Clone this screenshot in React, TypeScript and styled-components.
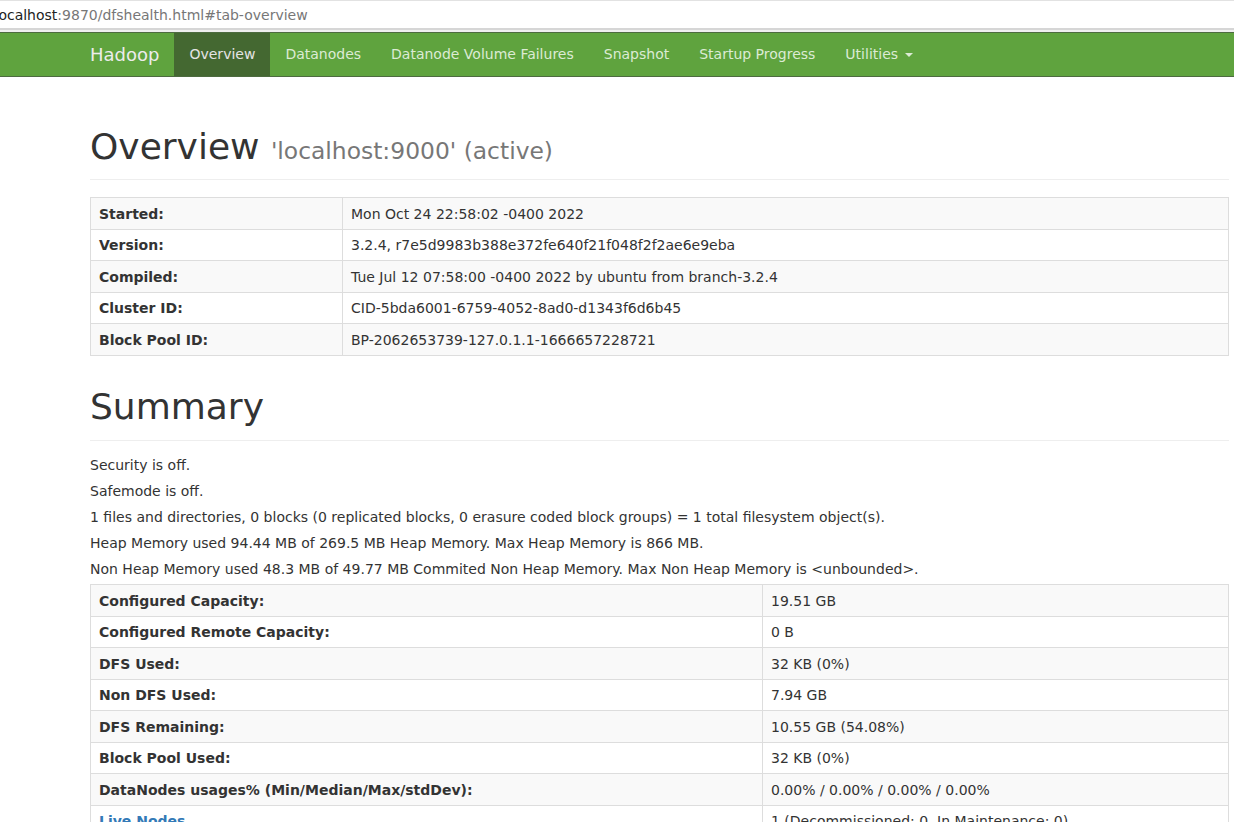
import React from 'react';
import styled, { createGlobalStyle } from 'styled-components';

const Global = createGlobalStyle`
  html, body { margin: 0; padding: 0; overflow: hidden; background: #fff; }
  body {
    font-family: "DejaVu Sans", "Liberation Sans", sans-serif;
    font-size: 14px;
    line-height: 20px;
    color: #333;
  }
  * { box-sizing: border-box; }
`;

const UrlBar = styled.div`
  height: 28px;
  border-top: 1px solid #e2e2e2;
  display: flex;
  align-items: center;
  font-size: 14px;
  white-space: nowrap;
  overflow: hidden;
`;

const UrlText = styled.span`
  margin-left: -5.5px;
  color: #777;
`;

const UrlHost = styled.span`
  color: #222;
`;

const UrlSeparator = styled.div`
  height: 4px;
  border-top: 2px solid #d6d6d6;
  background: #efefef;
`;

const Navbar = styled.nav`
  background: #5fa33e;
  border-top: 1px solid #4d6b40;
  border-bottom: 1px solid #4d6b40;
  height: 45px;
`;

const NavInner = styled.div`
  margin-left: 75px;
  display: flex;
  height: 43px;
`;

const Brand = styled.a`
  padding: 0 15px;
  font-size: 18px;
  line-height: 43px;
  color: #ececec;
  text-decoration: none;
`;

const NavLink = styled.a<{ $active?: boolean }>`
  padding: 0 15px;
  font-size: 14px;
  line-height: 43px;
  color: ${(p) => (p.$active ? '#e4e4e4' : '#dcebd4')};
  background: ${(p) => (p.$active ? '#446831' : 'transparent')};
  text-decoration: none;
  white-space: nowrap;
`;

const Caret = styled.span`
  display: inline-block;
  width: 0;
  height: 0;
  margin-left: 2px;
  vertical-align: middle;
  border-top: 4px solid currentColor;
  border-left: 4px solid transparent;
  border-right: 4px solid transparent;
`;

const Container = styled.main`
  margin-left: 90px;
  width: 1139px;
`;

const PageHeader = styled.div<{ $top: number; $pad: number; $bottom: number }>`
  margin-top: ${(p) => p.$top}px;
  padding-bottom: ${(p) => p.$pad}px;
  margin-bottom: ${(p) => p.$bottom}px;
  border-bottom: 1px solid #eee;
`;

const Title = styled.h1`
  margin: 0;
  font-size: 36px;
  line-height: 1.1;
  font-weight: normal;
  color: #333;
`;

const Sub = styled.small`
  font-size: 65%;
  color: #777;
  font-weight: normal;
`;

const Table = styled.table`
  width: 100%;
  border-collapse: collapse;
  table-layout: fixed;
  margin: 0;
`;

const Row = styled.tr`
  &:nth-child(odd) { background: #f9f9f9; }
`;

const Th = styled.th<{ $w?: number }>`
  width: ${(p) => (p.$w ? `${p.$w}px` : 'auto')};
  text-align: left;
  font-weight: bold;
  padding: 5.25px 8px;
  border: 1px solid #ddd;
  line-height: 20px;
  white-space: nowrap;
`;

const Td = styled.td`
  padding: 5.25px 8px;
  border: 1px solid #ddd;
  line-height: 20px;
  white-space: nowrap;
`;

const Link = styled.a`
  color: #337ab7;
  text-decoration: none;
`;

const Para = styled.p`
  margin: 0 0 5.8px;
  line-height: 20px;
  white-space: nowrap;
`;

const overview: [string, string][] = [
  ['Started:', 'Mon Oct 24 22:58:02 -0400 2022'],
  ['Version:', '3.2.4, r7e5d9983b388e372fe640f21f048f2f2ae6e9eba'],
  ['Compiled:', 'Tue Jul 12 07:58:00 -0400 2022 by ubuntu from branch-3.2.4'],
  ['Cluster ID:', 'CID-5bda6001-6759-4052-8ad0-d1343f6d6b45'],
  ['Block Pool ID:', 'BP-2062653739-127.0.1.1-1666657228721'],
];

const summary: [string, string, boolean?][] = [
  ['Configured Capacity:', '19.51 GB'],
  ['Configured Remote Capacity:', '0 B'],
  ['DFS Used:', '32 KB (0%)'],
  ['Non DFS Used:', '7.94 GB'],
  ['DFS Remaining:', '10.55 GB (54.08%)'],
  ['Block Pool Used:', '32 KB (0%)'],
  ['DataNodes usages% (Min/Median/Max/stdDev):', '0.00% / 0.00% / 0.00% / 0.00%'],
  ['Live Nodes', '1 (Decommissioned: 0, In Maintenance: 0)', true],
  ['Dead Nodes', '0 (Decommissioned: 0, In Maintenance: 0)', true],
  ['Decommissioning Nodes', '0', true],
  ['Entering Maintenance Nodes', '0', true],
];

const navItems = ['Datanodes', 'Datanode Volume Failures', 'Snapshot', 'Startup Progress'];

export default function App() {
  return (
    <>
      <Global />
      <UrlBar>
        <UrlText>
          <UrlHost>localhost</UrlHost>:9870/dfshealth.html#tab-overview
        </UrlText>
      </UrlBar>
      <UrlSeparator />
      <Navbar>
        <NavInner>
          <Brand>Hadoop</Brand>
          <NavLink $active>Overview</NavLink>
          {navItems.map((n) => (
            <NavLink key={n}>{n}</NavLink>
          ))}
          <NavLink>
            Utilities <Caret />
          </NavLink>
        </NavInner>
      </Navbar>
      <Container>
        <PageHeader $top={50.25} $pad={12.45} $bottom={17}>
          <Title>
            Overview <Sub>'localhost:9000' (active)</Sub>
          </Title>
        </PageHeader>
        <Table>
          <tbody>
            {overview.map(([k, v]) => (
              <Row key={k}>
                <Th $w={252}>{k}</Th>
                <Td>{v}</Td>
              </Row>
            ))}
          </tbody>
        </Table>
        <PageHeader $top={31.45} $pad={12.95} $bottom={14.6}>
          <Title>Summary</Title>
        </PageHeader>
        <Para>Security is off.</Para>
        <Para>Safemode is off.</Para>
        <Para>
          1 files and directories, 0 blocks (0 replicated blocks, 0 erasure coded block groups) = 1 total
          filesystem object(s).
        </Para>
        <Para>Heap Memory used 94.44 MB of 269.5 MB Heap Memory. Max Heap Memory is 866 MB.</Para>
        <Para>
          Non Heap Memory used 48.3 MB of 49.77 MB Commited Non Heap Memory. Max Non Heap Memory is
          &lt;unbounded&gt;.
        </Para>
        <Table>
          <tbody>
            {summary.map(([k, v, link]) => (
              <Row key={k}>
                <Th $w={672}>{link ? <Link>{k}</Link> : k}</Th>
                <Td>{v}</Td>
              </Row>
            ))}
          </tbody>
        </Table>
      </Container>
    </>
  );
}
